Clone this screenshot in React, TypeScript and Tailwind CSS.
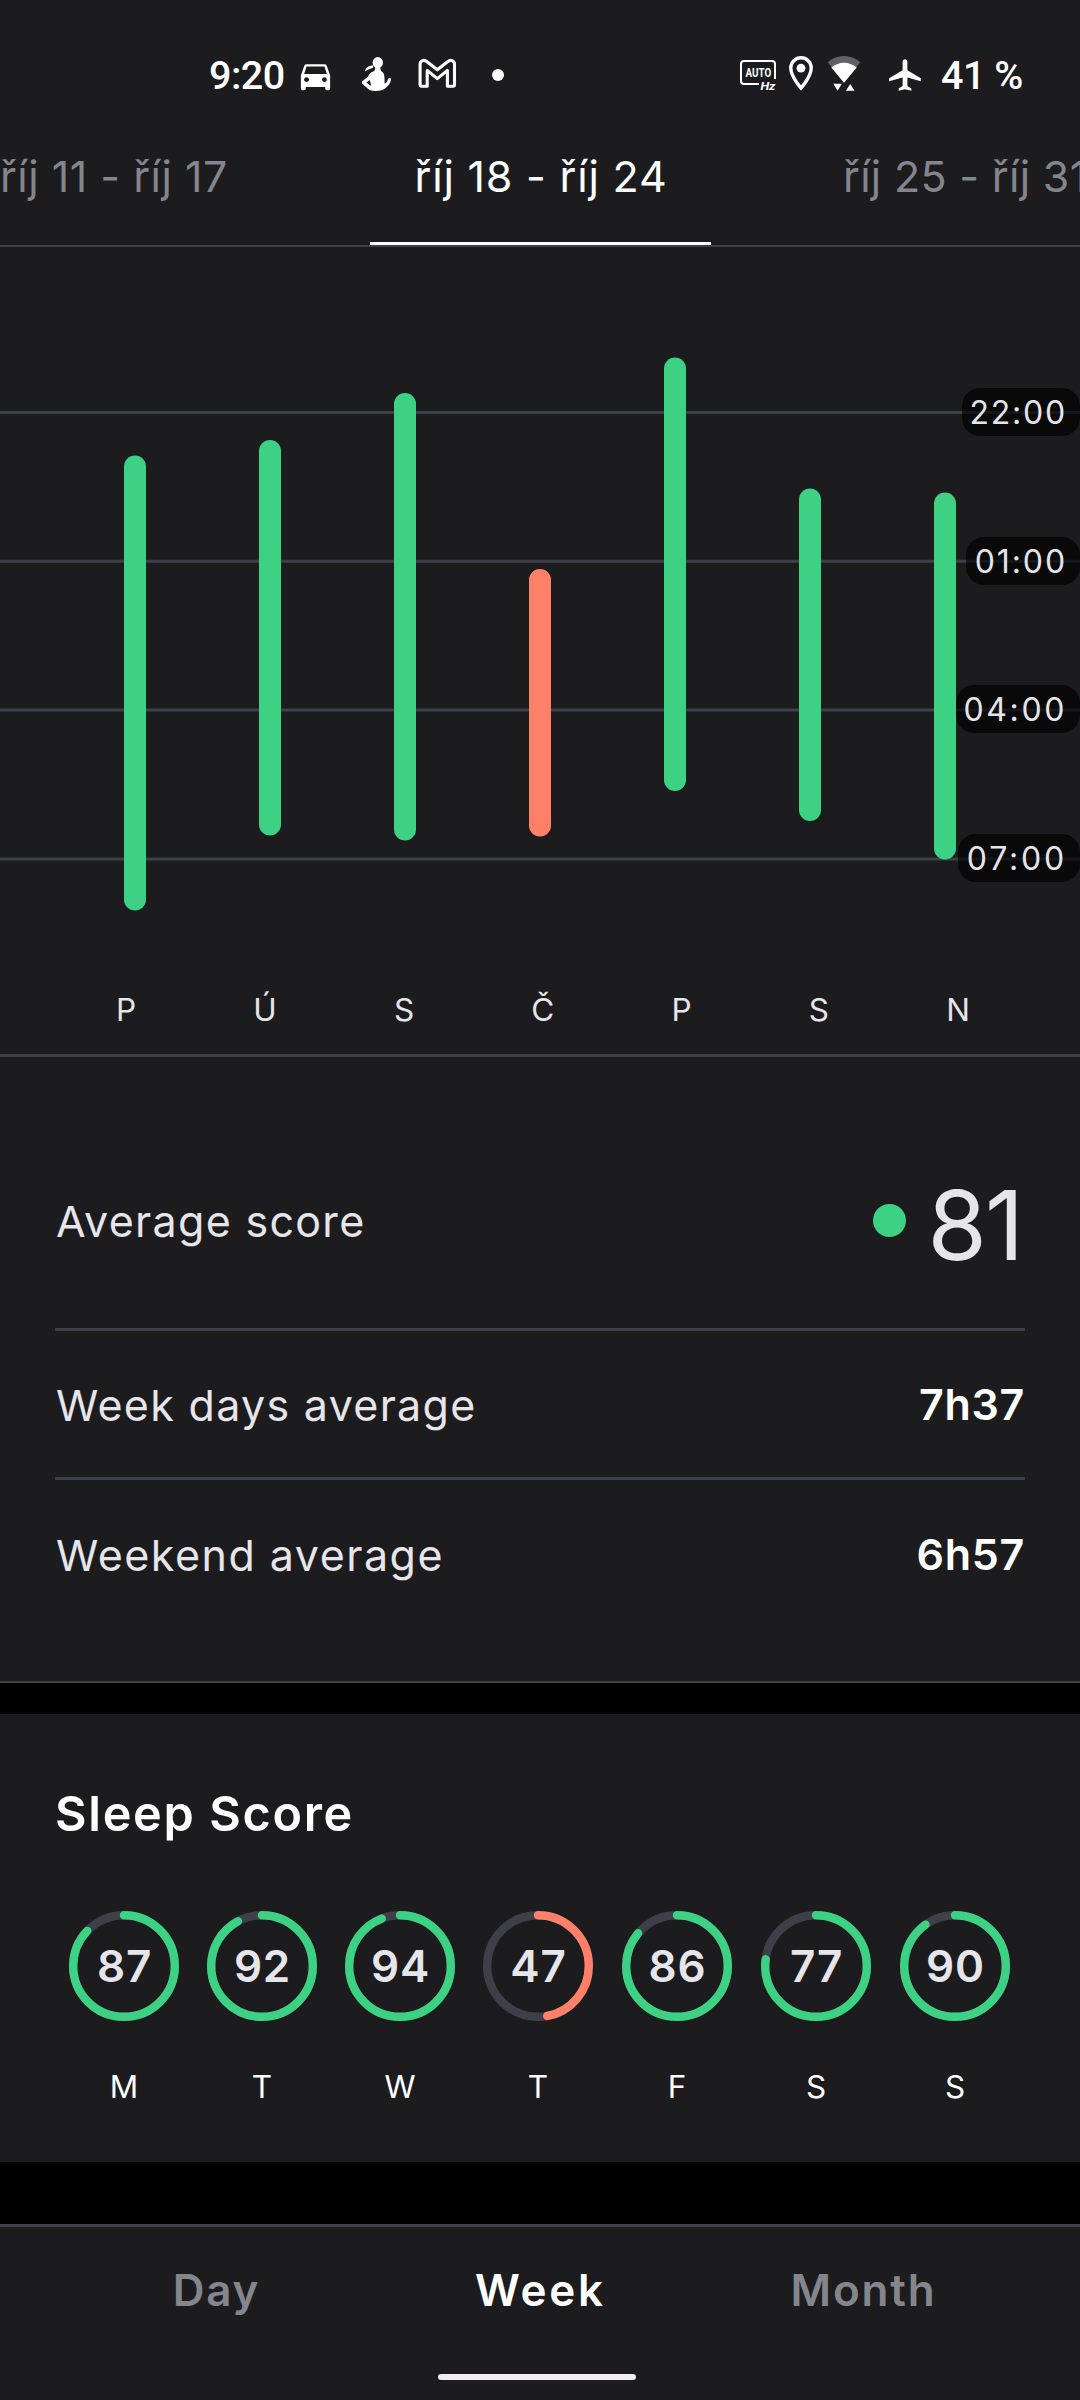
import { MdAirplanemodeActive, MdDirectionsCar } from "react-icons/md";

const GREEN = "#3dd184";
const CORAL = "#ff8068";

type Night = {
  label: string;
  top: number;
  bottom: number;
  color: string;
};

type Score = {
  label: string;
  value: number;
  color: string;
};

// top / bottom are chart coordinates, one hour is about 49.6 units
const nights: Night[] = [
  { label: "P", top: 208.5, bottom: 663.5, color: GREEN },
  { label: "Ú", top: 193, bottom: 588.5, color: GREEN },
  { label: "S", top: 146, bottom: 593.5, color: GREEN },
  { label: "Č", top: 322, bottom: 589.5, color: CORAL },
  { label: "P", top: 110.5, bottom: 544, color: GREEN },
  { label: "S", top: 241.5, bottom: 574, color: GREEN },
  { label: "N", top: 245.5, bottom: 612.5, color: GREEN },
];

const hours = [
  { label: "22:00", y: 165.5, pill: "top-[141px] w-[118px] tracking-[1.8px]" },
  { label: "01:00", y: 314.3, pill: "top-[290px] w-[114px] tracking-[1.9px]" },
  { label: "04:00", y: 463, pill: "top-[438px] w-[124px] tracking-[2.6px]" },
  { label: "07:00", y: 612, pill: "top-[587px] w-[122px] tracking-[2.8px]" },
];

const scores: Score[] = [
  { label: "M", value: 87, color: GREEN },
  { label: "T", value: 92, color: GREEN },
  { label: "W", value: 94, color: GREEN },
  { label: "T", value: 47, color: CORAL },
  { label: "F", value: 86, color: GREEN },
  { label: "S", value: 77, color: GREEN },
  { label: "S", value: 90, color: GREEN },
];

function StatusBar() {
  return (
    <div className="flex h-[150px] items-center pl-[209px] font-[Roboto,sans-serif] text-[39.5px] leading-none font-medium text-white">
      <span className="w-[77px] pt-px tracking-[-0.5px]">9:20</span>
      <MdDirectionsCar className="ml-[10px] size-[39px] shrink-0" />

      {/* Fitness */}
      <svg className="ml-[26px] h-10 w-8 shrink-0" viewBox="0 0 32 40" fill="currentColor">
        <ellipse cx="16.8" cy="7.6" rx="5.2" ry="5.6" />
        <path d="M3.8 16.2C4.6 12.4 8.2 10.6 12.4 10.2L12 12.8C9.4 13.4 7 15.2 3.8 16.2Z" />
        <path
          fillRule="evenodd"
          d="M14 11.5L19.5 12.5C19 15 20 16 21.6 17.2C23.6 18.8 23.6 22 23.6 28.6C25.6 27.6 26.4 26.4 26.8 24.4C27 22.4 30 22.4 30 24.4C29.8 28 27 31.6 22.6 34.6C19.6 36.4 12.4 36.2 9 35.2C6.4 33.2 3.4 30.6 1.2 28.4C.6 27.6 .8 26.6 1.6 26L7.2 21.6C8 18.6 9.8 17.2 13 16.2C14.2 15 14.4 13.4 14 11.5ZM8.8 25L5.4 27.6L9.8 31C10.2 29 9.4 27.4 8.8 25Z"
        />
      </svg>

      {/* Mail */}
      <svg
        className="ml-[25px] h-10 w-[39px] shrink-0"
        viewBox="0 0 39 40"
        fill="none"
        stroke="currentColor"
        strokeWidth="3.1"
        strokeLinejoin="round"
      >
        <path d="M3.6 31.3H9.2V15.5L19.3 23.6L29.4 15.5V31.3H35A1.5 1.5 0 0 0 36.5 29.8V9C36.5 6 33 4.4 30.2 6.2L19.3 14.8L8.4 6.2C5.6 4.4 2.1 6 2.1 9V29.8A1.5 1.5 0 0 0 3.6 31.3Z" />
      </svg>

      <span className="ml-[35px] size-3 shrink-0 rounded-full bg-white" />

      {/* Refresh rate */}
      <svg className="ml-[236px] h-10 w-[37px] shrink-0" viewBox="0 0 37 40">
        <path
          d="M19 29H4A3 3 0 0 1 1 26V9A3 3 0 0 1 4 6H32A3 3 0 0 1 35 9V24"
          fill="none"
          stroke="currentColor"
          strokeWidth="2"
        />
        <text x="5.6" y="22.3" fontSize="12.5" fontWeight="700" fill="currentColor" textLength="25.6" lengthAdjust="spacingAndGlyphs">
          AUTO
        </text>
        <text x="20.4" y="35" fontSize="11" fontWeight="700" fontStyle="italic" fill="currentColor" textLength="15" lengthAdjust="spacingAndGlyphs">
          Hz
        </text>
      </svg>

      {/* Location */}
      <svg className="ml-[11px] h-10 w-[26px] shrink-0" viewBox="0 0 26 40">
        <path
          d="M13 33C13 33 2.8 21.6 2.8 13A10.2 10.2 0 0 1 23.2 13C23.2 21.6 13 33 13 33Z"
          fill="none"
          stroke="currentColor"
          strokeWidth="3.4"
        />
        <circle cx="13" cy="13.2" r="4.4" fill="currentColor" />
      </svg>

      {/* Wifi */}
      <svg className="ml-[13px] h-10 w-[34px] shrink-0" viewBox="0 0 34 40" fill="currentColor">
        <path fill="#626264" d="M17 27.7L.7 7.3C10 -1.1 24 -1.1 33.3 7.3Z" />
        <path d="M17 27.7L4.3 12.5C12 6.2 22 6.2 29.7 12.5Z" />
        <path d="M6.3 28.7H14.9L10.6 35.8ZM18.9 35.8H27.5L23.2 29Z" />
      </svg>

      <MdAirplanemodeActive className="ml-[25px] size-[38px] shrink-0" />
      <span className="ml-[17px] pt-px tracking-[-0.5px] whitespace-nowrap">41 %</span>
    </div>
  );
}

function WeekTabs() {
  return (
    <div className="flex h-[97px] items-start overflow-hidden border-b-2 border-[#404148] text-[43px] leading-[53px] tracking-[0.8px] whitespace-nowrap text-[#84858d]">
      <button className="w-[370px] shrink-0 text-left tracking-[0.5px]">
        říj 11 - říj 17
      </button>
      <button className="h-[95px] w-[341px] shrink-0 border-b-[3px] border-white pb-[39px] pl-px text-white">
        říj 18 - říj 24
      </button>
      <button className="shrink-0 pl-[132px] tracking-[0.3px]">říj 25 - říj 31</button>
    </div>
  );
}

function SleepChart() {
  return (
    <section className="h-[810px] border-b-[3px] border-[#3e4049]">
      <div className="relative h-[720px]">
        <svg className="block" width="1080" height="720" viewBox="0 0 1080 720">
          {hours.map((h) => (
            <rect key={h.label} x="0" y={h.y - 1.5} width="1080" height="3" fill="#3e4049" />
          ))}
          {nights.map((n, i) => (
            <rect
              key={i}
              x={124 + i * 135}
              y={n.top}
              width="22"
              height={n.bottom - n.top}
              rx="11"
              fill={n.color}
            />
          ))}
        </svg>
        {hours.map((h) => (
          <span
            key={h.label}
            className={`absolute right-0 flex h-12 items-center justify-end rounded-[18px] bg-black/65 pt-[2px] pr-[13px] text-[32px] text-[#e5e5ea] ${h.pill}`}
          >
            {h.label}
          </span>
        ))}
      </div>
      <div className="flex h-[86px] items-center justify-between pr-[110px] pl-[116px] text-[31.5px] text-[#e5e5ea]">
        {nights.map((n, i) => (
          <span key={i}>{n.label}</span>
        ))}
      </div>
    </section>
  );
}

function Averages() {
  return (
    <section className="h-[626px] border-b-2 border-[#404148] px-[55px] pt-[58px] text-[43px] text-[#e5e5ea]">
      <div className="flex h-[216px] items-center justify-between border-b-[3px] border-[#3e4049]">
        <span className="pl-px tracking-[1.3px]">Average score</span>
        <div className="flex items-center">
          <span className="mr-[22px] mb-[2px] size-[33px] rounded-full bg-[#3dd184]" />
          <span className="pt-[7px] pr-[3px] text-[96px] leading-none tracking-[-2px]">81</span>
        </div>
      </div>
      <div className="flex h-[149px] items-center justify-between border-b-[3px] border-[#3e4049]">
        <span className="pt-[3px] pl-px tracking-[1.3px]">Week days average</span>
        <span className="font-semibold tracking-[0.7px] text-white">7h37</span>
      </div>
      <div className="flex h-[148px] items-center justify-between">
        <span className="pt-[3px] pl-px tracking-[1.5px]">Weekend average</span>
        <span className="font-semibold tracking-[0.7px] text-white">6h57</span>
      </div>
    </section>
  );
}

function ScoreRing({ value, color }: { value: number; color: string }) {
  const r = 50.8;
  const c = 2 * Math.PI * r;
  return (
    <div className="grid size-[110px] place-items-center">
      <svg className="col-start-1 row-start-1 size-[110px] -rotate-90" viewBox="0 0 110 110" fill="none" strokeWidth="8.4">
        <circle cx="55" cy="55" r={r} stroke="#3e4049" />
        <circle
          cx="55"
          cy="55"
          r={r}
          stroke={color}
          strokeLinecap="round"
          strokeDasharray={`${(c * value) / 100} ${c}`}
        />
      </svg>
      <span className="col-start-1 row-start-1 pl-px text-[44px] font-semibold tracking-[0.8px] text-[#e5e5ea]">
        {value}
      </span>
    </div>
  );
}

function SleepScore() {
  return (
    <section className="mt-[31px] h-[448px] bg-[#1c1c1e] pt-[70px]">
      <h2 className="pl-[55px] text-[48.5px] leading-[60px] font-semibold tracking-[1.7px] text-white">
        Sleep Score
      </h2>
      <div className="mt-[67px] flex gap-7 pl-[69px]">
        {scores.map((s, i) => (
          <div key={i} className={`flex flex-col items-center ${i > 3 ? "ml-px" : ""}`}>
            <ScoreRing value={s.value} color={s.color} />
            <span className="mt-[46px] text-[31.5px] leading-10 text-white">
              {s.label}
            </span>
          </div>
        ))}
      </div>
    </section>
  );
}

function BottomTabs() {
  return (
    <nav className="mt-[62px] flex h-[176px] flex-col items-center border-t-[3px] border-[#404148] bg-[#1c1c1e]">
      <div className="flex h-[126px] w-[970px] items-center text-[44px] font-semibold tracking-[1.8px] text-[#84858d]">
        <button className="flex-1">Day</button>
        <button className="flex-1 pl-px tracking-[2.8px] text-white">Week</button>
        <button className="flex-1">Month</button>
      </div>
      <div className="mt-[21px] mr-[6px] h-[6px] w-[198px] rounded-full bg-[#efedf2]" />
    </nav>
  );
}

export default function App() {
  return (
    <div className="h-[2400px] w-[1080px] overflow-hidden bg-black font-[Inter,sans-serif]">
      <div className="bg-[#1c1c1e]">
        <StatusBar />
        <WeekTabs />
        <SleepChart />
        <Averages />
      </div>
      <SleepScore />
      <BottomTabs />
    </div>
  );
}
